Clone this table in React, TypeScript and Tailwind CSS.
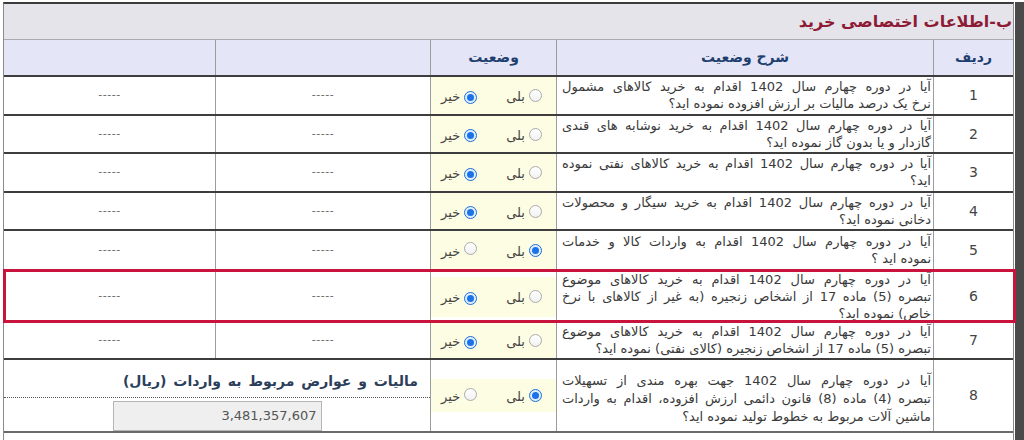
import React from "react";

type Row = {
  n: number;
  lines: string[];
  yes: boolean;
  h: string;
  pad: string;
};

const rows: Row[] = [
  {
    n: 1,
    lines: [
      "آیا در دوره چهارم سال 1402 اقدام به خرید کالاهای مشمول",
      "نرخ یک درصد مالیات بر ارزش افزوده نموده اید؟",
    ],
    yes: false,
    h: "h-[39px]",
    pad: "pt-[1px]",
  },
  {
    n: 2,
    lines: [
      "آیا در دوره چهارم سال 1402 اقدام به خرید نوشابه های قندی",
      "گازدار و یا بدون گاز نموده اید؟",
    ],
    yes: false,
    h: "h-[38px]",
    pad: "pt-[1px]",
  },
  {
    n: 3,
    lines: ["آیا در دوره چهارم سال 1402 اقدام به خرید کالاهای نفتی نموده", "اید؟"],
    yes: false,
    h: "h-[39px]",
    pad: "pt-[1px]",
  },
  {
    n: 4,
    lines: [
      "آیا در دوره چهارم سال 1402 اقدام به خرید سیگار و محصولات",
      "دخانی نموده اید؟",
    ],
    yes: false,
    h: "h-[38px]",
    pad: "pt-[1px]",
  },
  {
    n: 5,
    lines: ["آیا در دوره چهارم سال 1402 اقدام به واردات کالا و خدمات", "نموده اید ؟"],
    yes: true,
    h: "h-[40px]",
    pad: "pt-[2px]",
  },
  {
    n: 6,
    lines: [
      "آیا در دوره چهارم سال 1402 اقدام به خرید کالاهای موضوع",
      "تبصره (5) ماده 17 از اشخاص زنجیره (به غیر از کالاهای با نرخ",
      "خاص) نموده اید؟",
    ],
    yes: false,
    h: "h-[52px]",
    pad: "pt-[0px]",
  },
  {
    n: 7,
    lines: [
      "آیا در دوره چهارم سال 1402 اقدام به خرید کالاهای موضوع",
      "تبصره (5) ماده 17 از اشخاص زنجیره (کالای نفتی) نموده اید؟",
    ],
    yes: false,
    h: "h-[37px]",
    pad: "pt-[0px]",
  },
];

const row8 = [
  "آیا در دوره چهارم سال 1402 جهت بهره مندی از تسهیلات",
  "تبصره (4) ماده (8) قانون دائمی ارزش افزوده، اقدام به واردات",
  "ماشین آلات مربوط به خطوط تولید نموده اید؟",
];

// full lines are spread across the cell, the last one stays right-aligned
function Lines({ lines }: { lines: string[] }) {
  return (
    <>
      {lines.map((l, i) => (
        <div
          key={l}
          className={
            i < lines.length - 1
              ? "whitespace-nowrap text-justify [text-align-last:justify]"
              : "whitespace-nowrap"
          }
        >
          {l}
        </div>
      ))}
    </>
  );
}

function Radio({ on }: { on: boolean }) {
  if (on) {
    return (
      <span className="inline-flex w-[13px] h-[13px] shrink-0 items-center justify-center rounded-full border border-[#1b6fd6] bg-[#e3eefc]">
        <span className="w-[7px] h-[7px] rounded-full bg-[#1a73e8]" />
      </span>
    );
  }
  return (
    <span className="inline-block w-[13px] h-[13px] shrink-0 rounded-full border border-[#ababab] bg-gradient-to-b from-white to-[#f1f1f1]" />
  );
}

function Choice({ yes, box }: { yes: boolean; box: string }) {
  return (
    <div className="flex items-center border-l border-[#9c9c9c]">
      <div className={`flex w-full items-center bg-[#fdfde3] pr-[14px] ${box}`}>
        <Radio on={yes} />
        <span className="mr-[4px] mt-[3px] text-[13px] text-[#444]">بلی</span>
        <span className="mr-[29px]">
          <Radio on={!yes} />
        </span>
        <span className="mr-[4px] mt-[3px] text-[13px] text-[#444]">خیر</span>
      </div>
    </div>
  );
}

function Dash() {
  return <span className="text-[11px] tracking-[0.5px] text-[#666]">-----</span>;
}

export default function App() {
  return (
    <div
      className="flex h-[440px] w-[1024px] bg-white pt-[2px]"
      style={{ fontFamily: '"DejaVu Sans", Tahoma, sans-serif' }}
    >
      <div dir="rtl" className="ml-[3px] flex w-[1011px] flex-col border-x border-t-2 border-[#8a8a8a] border-t-[#3b3b3b]">
        {/* title */}
        <div className="flex h-[36px] items-center border-b border-[#a9a9b4] bg-[#e4e4ea] pr-[1px]">
          <span className="text-[16px] font-bold text-[#8e1b35]">ب-اطلاعات اختصاصی خرید</span>
        </div>

        {/* header */}
        <div className="grid h-[37px] grid-cols-[80px_377px_126px_215px_1fr] border-b-2 border-[#3d3d3d] bg-[#e5e5f8] text-[14px] font-bold text-[#1f3f6e]">
          <div className="flex items-center justify-center border-l border-[#9c9c9c]">ردیف</div>
          <div className="flex items-center justify-center border-l border-[#9c9c9c]">شرح وضعیت</div>
          <div className="flex items-center justify-center border-l border-[#9c9c9c]">وضعیت</div>
          <div className="border-l border-[#9c9c9c]" />
          <div />
        </div>

        {rows.map((r) => (
          <div
            key={r.n}
            className={`relative grid grid-cols-[80px_377px_126px_215px_1fr] border-b-2 border-[#3d3d3d] ${r.h}`}
          >
            <div className="flex items-center justify-center border-l border-[#9c9c9c] text-[14px] text-[#444]">
              {r.n}
            </div>
            <div className={`border-l border-[#9c9c9c] pl-[5px] pr-[2px] text-[13px] leading-[17px] text-[#3a3a3a] ${r.pad}`}>
              <Lines lines={r.lines} />
            </div>
            <Choice yes={r.yes} box={r.n === 6 ? "h-[40px]" : "h-full"} />
            <div className="flex items-center justify-center border-l border-[#9c9c9c]">
              <Dash />
            </div>
            <div className="flex items-center justify-center">
              <Dash />
            </div>
            {r.n === 6 && (
              <span className="pointer-events-none absolute -left-[1px] -right-[3px] -top-[2px] -bottom-[2px] border-[3px] border-[#c8143c]" />
            )}
          </div>
        ))}

        {/* row 8 */}
        <div className="grid h-[73px] grid-cols-[80px_377px_126px_1fr] border-b-2 border-[#6a6a6a]">
          <div className="flex items-center justify-center border-l border-[#9c9c9c] text-[14px] text-[#444]">
            8
          </div>
          <div className="flex flex-col justify-center border-l border-[#9c9c9c] pl-[5px] pr-[2px] pt-[6px] text-[13px] leading-[18px] text-[#3a3a3a]">
            <Lines lines={row8} />
          </div>
          <Choice yes={true} box="h-[33px]" />
          <div className="flex flex-col">
            <div className="flex h-[37px] items-end pb-[5px] pr-[12px] text-[14px] font-bold text-[#2c3e5a] [word-spacing:2px]">
              مالیات و عوارض مربوط به واردات (ریال)
            </div>
            <div className="border-t border-dotted border-[#555]" />
            <div className="flex flex-1 items-end justify-center">
              <div className="flex h-[30px] w-[209px] items-center border border-[#b5b5b5] bg-[#efefef] pr-[4px] text-[13px] text-[#555]">
                3,481,357,607
              </div>
            </div>
          </div>
        </div>
      </div>
      <div className="ml-[1px] h-full w-[9px] bg-[#4a4a4a]" />
    </div>
  );
}
